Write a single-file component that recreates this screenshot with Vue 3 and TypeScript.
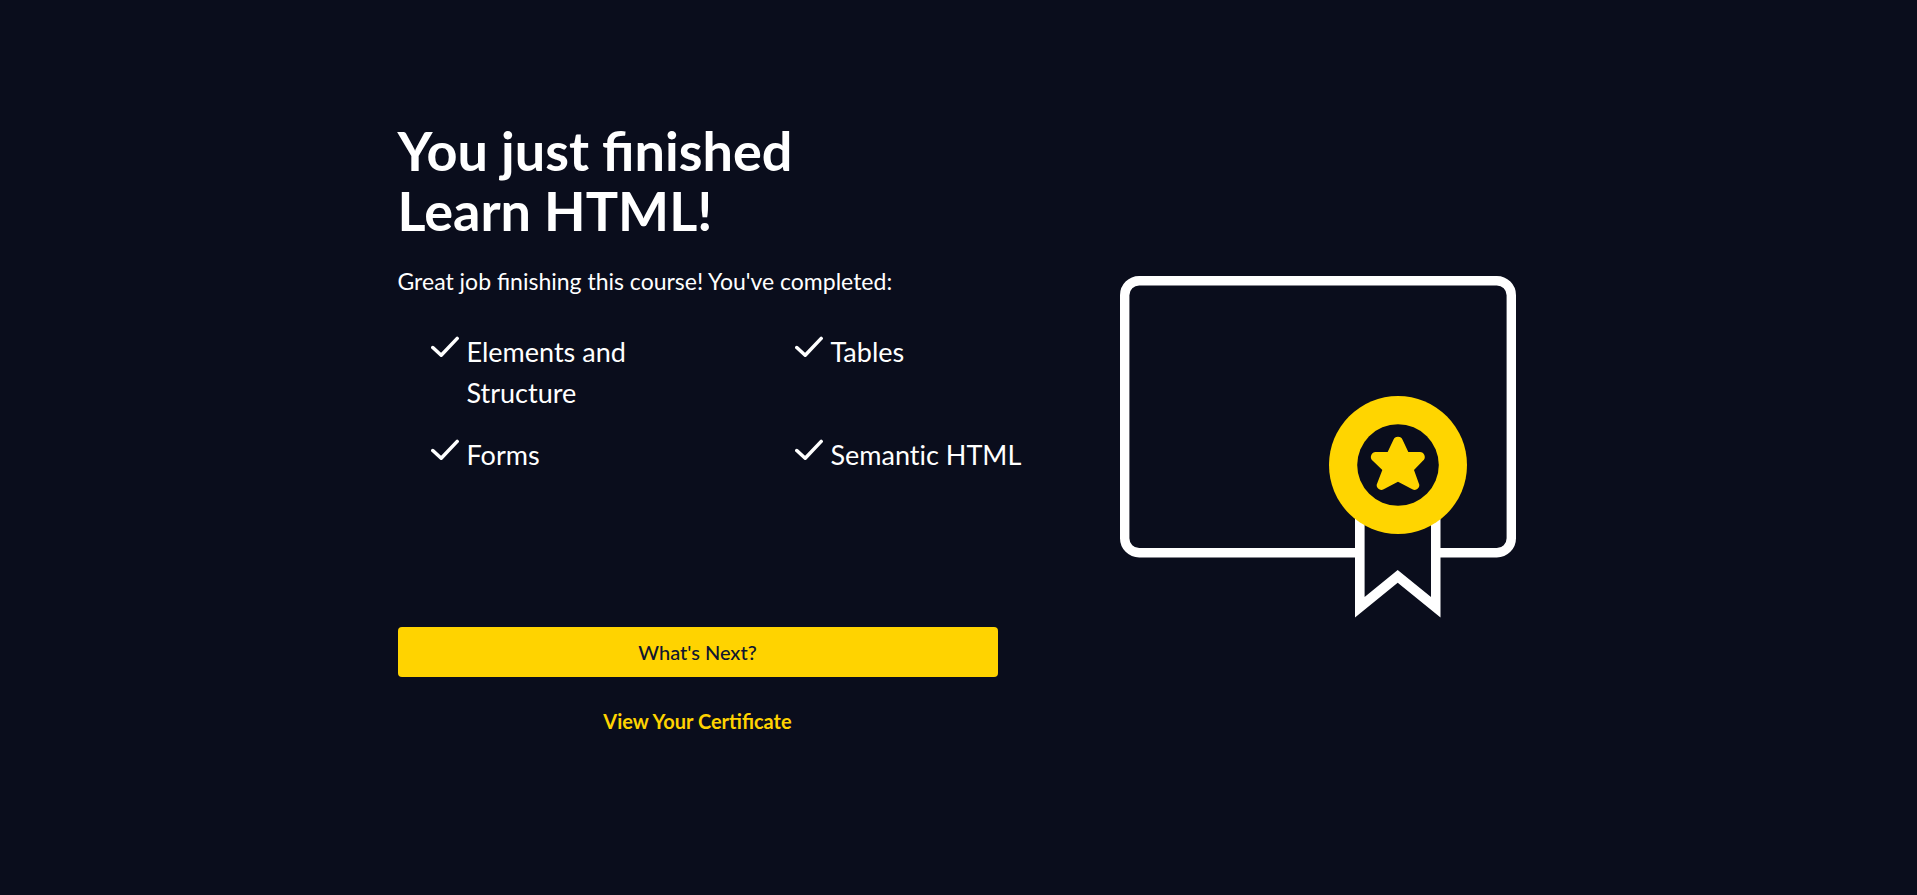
<script setup lang="ts">
const topics: string[] = ['Elements and Structure', 'Tables', 'Forms', 'Semantic HTML']
</script>

<template>
  <main class="page">
    <section class="summary">
      <h1 class="title">You just finished<br />Learn HTML!</h1>
      <p class="lead">Great job finishing this course! You've completed:</p>
      <ul class="topics">
        <li v-for="topic in topics" :key="topic" class="topic">
          <svg class="check" viewBox="0 0 28 22" aria-hidden="true">
            <path d="M1.8 11.5L10.2 19.2L26.2 2.4" />
          </svg>
          <span>{{ topic }}</span>
        </li>
      </ul>
      <div class="actions">
        <button type="button" class="next">What's Next?</button>
        <a href="#certificate" class="certificate-link">View Your Certificate</a>
      </div>
    </section>

    <svg class="certificate" viewBox="0 0 396 342" role="img" aria-label="Certificate">
      <rect class="frame" x="4.7" y="4.7" width="386.6" height="272" rx="14.5" />
      <path class="ribbon-back" d="M235 170H320.5V341.5L277.7 306.7L235 341.5Z" />
      <path class="ribbon-front" d="M244.6 170H311V321L277.7 294L244.6 321Z" />
      <circle class="gold" cx="278" cy="189" r="69" />
      <circle class="hole" cx="278" cy="189" r="40.8" />
      <path
        class="gold"
        transform="translate(180 104) scale(0.3333)"
        d="M263 216L280 180A15 15 0 0 1 308 180L325 216H357A15 15 0 0 1 368 243L342 270L356 309A14 14 0 0 1 337 328L294 305L251 328A14 14 0 0 1 232 309L247 270L219 243A15 15 0 0 1 230 216Z"
      />
    </svg>
  </main>
</template>

<style>
body {
  margin: 0;
  background: #0a0d1c;
}
</style>

<style scoped>
.page {
  box-sizing: border-box;
  display: flex;
  justify-content: center;
  gap: 122px;
  min-height: 100vh;
  padding: 121px 26px 0 22px;
  background: #0a0d1c;
  color: #fff;
  font-family: Lato, "Liberation Sans", sans-serif;
}

.summary {
  flex: 0 1 600px;
}

.title {
  margin: 0;
  font-size: 54px;
  line-height: 60px;
  font-weight: 700;
}

.lead {
  margin: 22px 0 0;
  font-size: 23px;
  line-height: 36px;
}

.topics {
  display: grid;
  grid-template-columns: 1fr 1fr;
  gap: 21px 128px;
  margin: 32px -33px 0 33px;
  padding: 0;
  list-style: none;
  font-size: 27px;
  line-height: 41px;
  font-variant-ligatures: none;
}

.topic {
  display: flex;
  align-items: flex-start;
  gap: 8px;
}

.check {
  flex: none;
  width: 28px;
  height: 22px;
  margin-top: 5px;
  fill: none;
  stroke: #fff;
  stroke-width: 3.5;
  stroke-linecap: round;
  stroke-linejoin: round;
}

.actions {
  display: flex;
  flex-direction: column;
  align-items: center;
  gap: 30px;
  margin-top: 152px;
}

.next {
  width: 100%;
  height: 50px;
  padding: 0;
  border: 0;
  border-radius: 4px;
  background: #ffd300;
  color: #10162f;
  font: 500 20px Lato, "Liberation Sans", sans-serif;
  cursor: pointer;
}

.certificate-link {
  color: #ffd300;
  font-size: 20px;
  line-height: 28px;
  font-weight: 700;
  text-decoration: none;
}

.certificate {
  flex: 0 1 396px;
  height: 342px;
  margin-top: 155px;
}

.frame {
  fill: none;
  stroke: #fff;
  stroke-width: 9.4;
}

.ribbon-back {
  fill: #fff;
}

.ribbon-front,
.hole {
  fill: #0a0d1c;
}

.gold {
  fill: #ffd500;
}
</style>
